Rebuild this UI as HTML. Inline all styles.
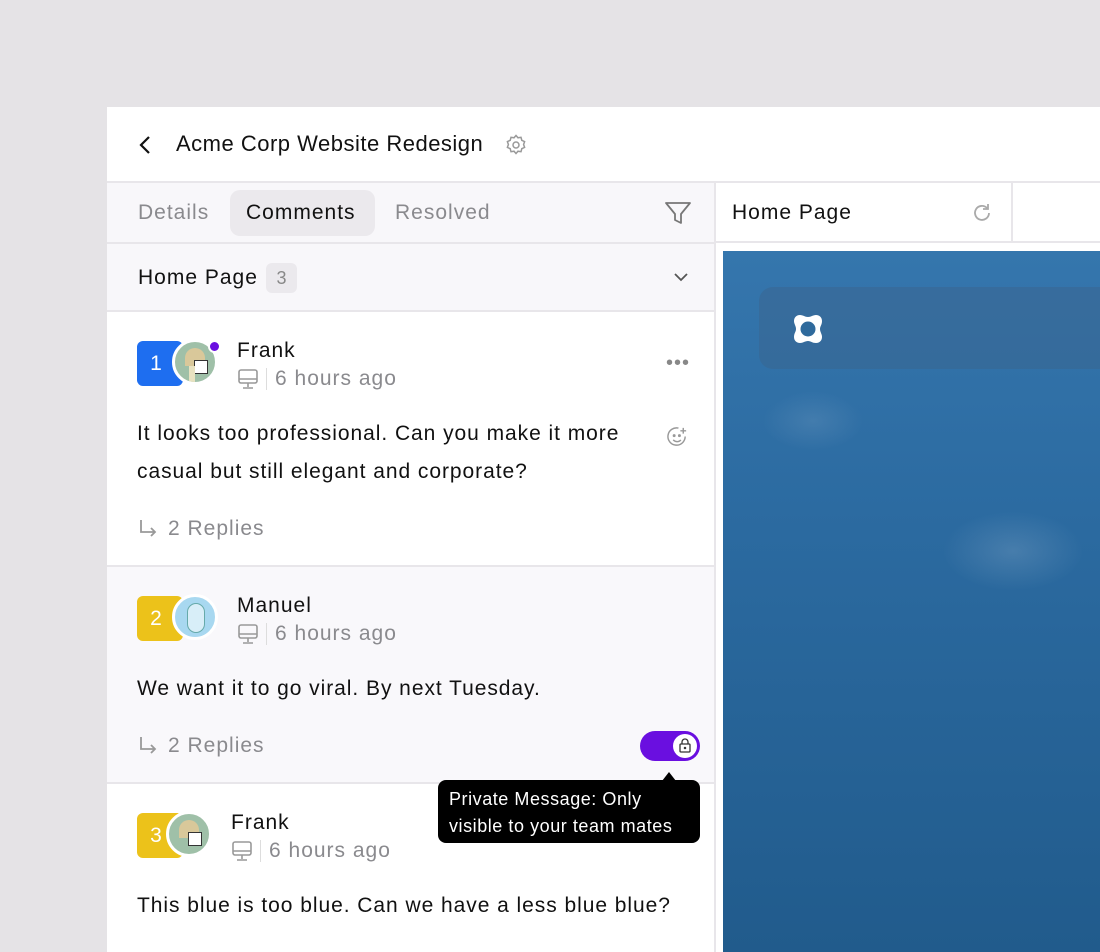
<!DOCTYPE html>
<html><head><meta charset="utf-8"><style>
*{box-sizing:border-box;margin:0;padding:0}
body{width:1100px;height:952px;background:#e5e3e6;font-family:"Liberation Sans",sans-serif;position:relative;overflow:hidden;color:#111}
.abs{position:absolute}
.panel{left:107px;top:107px;width:993px;height:845px;background:#fff}
.t{position:absolute;white-space:nowrap;letter-spacing:1px}
.grey{color:#8a8a8e}
.line{position:absolute;background:#e8e6ea}
.badge{position:absolute;width:46px;height:45px;border-radius:6px;color:#fff;font-size:21px;text-align:center;line-height:45px;padding-right:8px}
.av{position:absolute;width:46px;height:46px;border-radius:50%;border:3px solid #fff;overflow:hidden}
.body{font-size:21px;letter-spacing:0.95px}
</style></head><body>
<div class="abs panel"></div>
<!-- header -->
<svg class="abs" style="left:137px;top:135px" width="16" height="20" viewBox="0 0 16 20"><path d="M12 2L4 10l8 8" fill="none" stroke="#111" stroke-width="2.2"/></svg>
<div class="t" style="left:176px;top:131px;font-size:22px;letter-spacing:0.5px">Acme Corp Website Redesign</div>
<svg class="abs" style="left:504px;top:133px" width="24" height="24" viewBox="0 0 24 24" fill="none" stroke="#999" stroke-width="1.5"><circle cx="12" cy="12" r="3"/><path d="M12 2.5l2 2.3 3-.5.8 3 2.8 1.3-1 2.9 1 2.9-2.8 1.3-.8 3-3-.5-2 2.3-2-2.3-3 .5-.8-3-2.8-1.3 1-2.9-1-2.9 2.8-1.3.8-3 3 .5z"/></svg>
<div class="line" style="left:107px;top:181px;width:993px;height:2px"></div>
<!-- left tabs -->
<div class="abs" style="left:107px;top:183px;width:607px;height:60px;background:#f8f7fa"></div>
<div class="abs" style="left:230px;top:190px;width:145px;height:46px;background:#ebe9ed;border-radius:10px"></div>
<div class="t grey" style="left:138px;top:201px;font-size:21px">Details</div>
<div class="t" style="left:246px;top:201px;font-size:21px">Comments</div>
<div class="t grey" style="left:395px;top:201px;font-size:21px">Resolved</div>
<svg class="abs" style="left:664px;top:200px" width="28" height="26" viewBox="0 0 28 26"><path d="M2 3h24l-9 11v9l-6-3v-6z" fill="none" stroke="#777" stroke-width="1.8" stroke-linejoin="round"/></svg>
<div class="line" style="left:107px;top:242px;width:607px;height:2px"></div>
<!-- group header -->
<div class="abs" style="left:107px;top:244px;width:607px;height:67px;background:#f8f7fa"></div>
<div class="t" style="left:138px;top:266px;font-size:21px">Home Page</div>
<div class="abs" style="left:266px;top:263px;width:31px;height:30px;background:#ebe9ed;border-radius:6px;color:#888;font-size:18px;text-align:center;line-height:30px">3</div>
<svg class="abs" style="left:673px;top:272px" width="16" height="10" viewBox="0 0 16 10"><path d="M2 2l6 6 6-6" fill="none" stroke="#555" stroke-width="1.8"/></svg>
<div class="line" style="left:107px;top:310px;width:607px;height:2px"></div>
<!-- comment 1 -->
<div class="badge" style="left:137px;top:341px;background:#1e6ef0">1</div>
<div class="av" style="left:172px;top:339px;background:#9fc0a8"><div style="position:absolute;left:10px;top:6px;width:20px;height:18px;background:#d9c89a;border-radius:10px 10px 0 0"></div><div style="position:absolute;left:19px;top:18px;width:14px;height:14px;background:#fff;border:1px solid #333"></div><div style="position:absolute;left:14px;top:24px;width:6px;height:20px;background:#e8e2c0"></div></div>
<div class="abs" style="left:208px;top:340px;width:13px;height:13px;border-radius:50%;background:#6a0fe0;border:2px solid #fff"></div>
<div class="t" style="left:237px;top:339px;font-size:21px">Frank</div>
<svg class="abs" style="left:237px;top:368px" width="22" height="22" viewBox="0 0 22 22" fill="none" stroke="#999" stroke-width="1.6"><rect x="2" y="2" width="18" height="13" rx="2"/><path d="M2 11h18M11 15v4M6 20h10"/></svg>
<div class="abs" style="left:266px;top:368px;width:1px;height:22px;background:#ddd"></div>
<div class="t grey" style="left:275px;top:367px;font-size:21px">6 hours ago</div>
<div class="t" style="left:666px;top:352px;font-size:20px;color:#888;letter-spacing:1px">•••</div>
<div class="t body" style="left:137px;top:415px;line-height:38px">It looks too professional. Can you make it more<br>casual but still elegant and corporate?</div>
<svg class="abs" style="left:666px;top:426px" width="23" height="23" viewBox="0 0 24 24" fill="none" stroke="#999" stroke-width="1.5"><path d="M20 11a9 9 0 1 1-7-8.8"/><circle cx="8.5" cy="10" r=".8" fill="#999"/><circle cx="14" cy="10" r=".8" fill="#999"/><path d="M7.5 14.5c2.5 2.5 6 2.5 8 0M18 2v6M15 5h6"/></svg>
<svg class="abs" style="left:138px;top:518px" width="20" height="20" viewBox="0 0 20 20" fill="none" stroke="#999" stroke-width="1.8"><path d="M3 2v12h14M13 10l4 4-4 4"/></svg>
<div class="t grey" style="left:168px;top:517px;font-size:21px">2 Replies</div>
<div class="line" style="left:107px;top:565px;width:607px;height:2px"></div>
<!-- comment 2 -->
<div class="abs" style="left:107px;top:567px;width:607px;height:216px;background:#f9f8fb"></div>
<div class="badge" style="left:137px;top:596px;background:#ecc21a">2</div>
<div class="av" style="left:172px;top:594px;background:#a8d8f0"><div style="position:absolute;left:12px;top:6px;width:18px;height:30px;background:#d8eef8;border-radius:9px;border:1px solid #6aa"></div></div>
<div class="t" style="left:237px;top:594px;font-size:21px">Manuel</div>
<svg class="abs" style="left:237px;top:623px" width="22" height="22" viewBox="0 0 22 22" fill="none" stroke="#999" stroke-width="1.6"><rect x="2" y="2" width="18" height="13" rx="2"/><path d="M2 11h18M11 15v4M6 20h10"/></svg>
<div class="abs" style="left:266px;top:623px;width:1px;height:22px;background:#ddd"></div>
<div class="t grey" style="left:275px;top:622px;font-size:21px">6 hours ago</div>
<div class="t body" style="left:137px;top:677px">We want it to go viral. By next Tuesday.</div>
<svg class="abs" style="left:138px;top:735px" width="20" height="20" viewBox="0 0 20 20" fill="none" stroke="#999" stroke-width="1.8"><path d="M3 2v12h14M13 10l4 4-4 4"/></svg>
<div class="t grey" style="left:168px;top:734px;font-size:21px">2 Replies</div>
<div class="abs" style="left:640px;top:731px;width:60px;height:30px;border-radius:15px;background:#6a0fe0"></div>
<div class="abs" style="left:673px;top:734px;width:24px;height:24px;border-radius:50%;background:#fff"></div>
<svg class="abs" style="left:678px;top:738px" width="14" height="15" viewBox="0 0 14 15" fill="none" stroke="#333" stroke-width="1.3"><rect x="2" y="6" width="10" height="8" rx="1"/><path d="M4 6V4a3 3 0 0 1 6 0v2"/><circle cx="7" cy="10" r=".6" fill="#333"/></svg>
<div class="line" style="left:107px;top:782px;width:607px;height:2px"></div>
<!-- comment 3 -->
<div class="badge" style="left:137px;top:813px;background:#ecc21a">3</div>
<div class="av" style="left:166px;top:811px;background:#9fc0a8"><div style="position:absolute;left:10px;top:6px;width:20px;height:18px;background:#d9c89a;border-radius:10px 10px 0 0"></div><div style="position:absolute;left:19px;top:18px;width:14px;height:14px;background:#fff;border:1px solid #333"></div></div>
<div class="t" style="left:231px;top:811px;font-size:21px">Frank</div>
<svg class="abs" style="left:231px;top:840px" width="22" height="22" viewBox="0 0 22 22" fill="none" stroke="#999" stroke-width="1.6"><rect x="2" y="2" width="18" height="13" rx="2"/><path d="M2 11h18M11 15v4M6 20h10"/></svg>
<div class="abs" style="left:260px;top:840px;width:1px;height:22px;background:#ddd"></div>
<div class="t grey" style="left:269px;top:839px;font-size:21px">6 hours ago</div>
<div class="t body" style="left:137px;top:894px">This blue is too blue. Can we have a less blue blue?</div>
<!-- tooltip -->
<div class="abs" style="left:438px;top:780px;width:262px;height:63px;background:#000;border-radius:8px;color:#fff;font-size:18px;line-height:27px;padding:6px 0 0 11px;letter-spacing:0.55px;white-space:nowrap">Private Message: Only<br>visible to your team mates</div>
<div class="abs" style="left:662px;top:772px;width:0;height:0;border-left:7px solid transparent;border-right:7px solid transparent;border-bottom:9px solid #000"></div>
<!-- right side -->
<div class="line" style="left:714px;top:183px;width:2px;height:769px"></div>
<div class="t" style="left:732px;top:201px;font-size:21px">Home Page</div>
<svg class="abs" style="left:971px;top:202px" width="22" height="22" viewBox="0 0 22 22" fill="none" stroke="#aaa" stroke-width="1.8"><path d="M18 11a7 7 0 1 1-2-5M17 2v5h-5"/></svg>
<div class="line" style="left:1011px;top:183px;width:2px;height:59px"></div>
<div class="line" style="left:716px;top:241px;width:384px;height:2px"></div>
<div class="abs" style="left:723px;top:251px;width:377px;height:701px;background:radial-gradient(ellipse 70px 40px at 290px 300px,rgba(200,215,230,.18),transparent),radial-gradient(ellipse 50px 30px at 90px 170px,rgba(180,200,220,.15),transparent),linear-gradient(180deg,#3576ad 0%,#2b6aa0 40%,#215b8c 100%)"></div>
<div class="abs" style="left:759px;top:287px;width:341px;height:82px;background:rgba(60,100,140,.45);border-radius:14px 0 0 14px"></div>
<svg class="abs" style="left:793px;top:314px" width="30" height="30" viewBox="0 0 30 30"><path d="M7 1c3 0 5 2 8 2s5-2 8-2 6 2 6 6-2 5-2 8 2 5 2 8-2 6-6 6-5-2-8-2-5 2-8 2-6-2-6-6 2-5 2-8-2-5-2-8 2-6 6-6z" fill="#fff"/><circle cx="15" cy="15" r="7.5" fill="#2f6a9c"/></svg>
</body></html>
